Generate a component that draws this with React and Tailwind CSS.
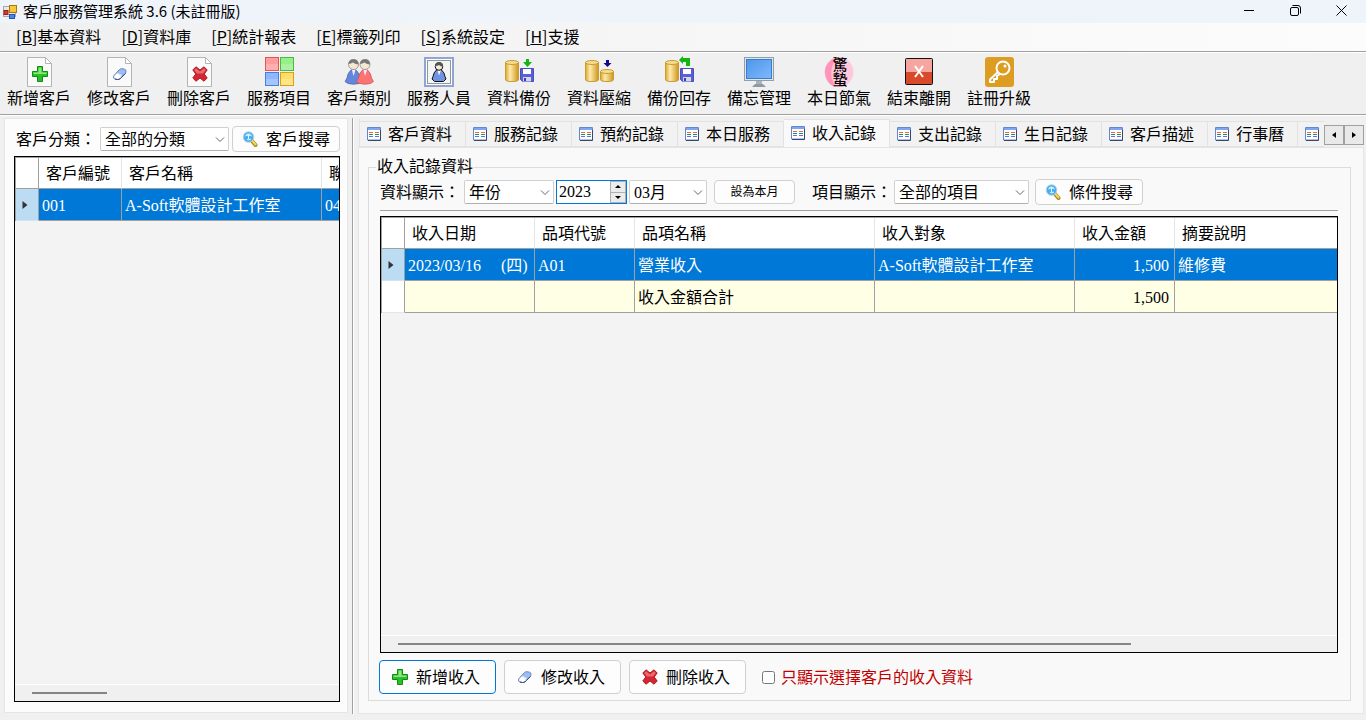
import { useState } from "react";

const PlusShape = () => (
  <>
    <path
      d="M5.500 .5h5v5h5v5h-5v5h-5v-5h-5v-5h5z"
      fill="#27c027"
      stroke="#0f8a12"
    />
    <path d="M6.500 1.500h3v5h5v1.500h-13v-1.500h5z" fill="#8bea7c" />
  </>
);

const EraserShape = () => (
  <>
    <path
      d="M2 9.500 7.500 3.500Q8.500 2.500 9.800 2.700L12.500 3.200Q14.300 3.700 14 5.500L13.500 7.500 8 12.700Q7 13.600 5.500 13.500L3 13Q1.300 12.500 1.500 11z"
      fill="#9dbcf5"
      stroke="#6a84b8"
    />
    <path
      d="M2.300 10 4.800 7.500 9 9.300 7.800 12Q6.800 13.200 5.500 13L3.200 12.500Q1.800 12 2.300 10z"
      fill="#fff"
    />
    <path d="m3 13 2.500.5q1.500.1 2.500-.8l5.500-5.200" fill="none" stroke="#33466e" />
    <path d="M5 7.200 9.300 9 8.500 11.800" fill="none" stroke="#dfe9fb" />
  </>
);

const CrossShape = () => (
  <>
    <path
      d="M4 .8 8 4 12 .8 15.200 4 12.200 8 15.200 12 12 15.200 8 12 4 15.200.8 12 3.800 8 .8 4z"
      fill="#d42631"
      stroke="#b01822"
      strokeLinejoin="round"
    />
    <path d="M4 2.200 8 5.500 12 2.200 13.800 4 11 7.500H5L2.200 4z" fill="#e8696f" />
  </>
);

const shapes = { plus: PlusShape, eraser: EraserShape, cross: CrossShape };

const SmallIcon = ({ name }) => {
  const Shape = shapes[name];
  return (
    <svg width="16" height="16" viewBox="0 0 16 16" aria-hidden="true">
      <Shape />
    </svg>
  );
};

const PageIcon = ({ name }) => {
  const Shape = shapes[name];
  return (
    <svg width="32" height="32" viewBox="0 0 32 32" aria-hidden="true">
      <path
        d="M4.500 1.500h18l6 6v23h-24z"
        fill="#fafafa"
        stroke="#b4b4b4"
      />
      <path d="M22.500 1.500v6h6z" fill="#fff" stroke="#b4b4b4" />
      <g transform="translate(9 10)">
        <Shape />
      </g>
    </svg>
  );
};

const TilesIcon = () => (
  <svg width="32" height="32" viewBox="0 0 32 32" aria-hidden="true">
    <rect x="2.500" y="1.500" width="13" height="13" fill="#ff9c9c" stroke="#e25555" />
    <rect x="17.500" y="1.500" width="13" height="13" fill="#98ee88" stroke="#4fb64a" />
    <rect x="2.500" y="16.500" width="13" height="13" fill="#8db8ff" stroke="#4b7fd6" />
    <rect x="17.500" y="16.500" width="13" height="13" fill="#ffdf6b" stroke="#dc9f1c" />
    <path d="M3 8h12v6H3zM18 8h12v6H18zM3 23h12v6H3zM18 23h12v6H18z" fill="#fff" opacity=".2" />
  </svg>
);

const Person = ({ body, edge }) => (
  <>
    <path
      d="M6 12h5q3.500 3 4 8l2 3.500-3 2q-5.500 1.500-11 0l-3-2L2 20q.5-5 4-8z"
      fill={body}
      stroke={edge}
      strokeWidth=".7"
    />
    <path d="M7 12 8.500 18l2-6z" fill="#eef" />
    <circle cx="8.500" cy="6.500" r="5" fill="#f7e6d2" stroke="#8b8b8b" strokeWidth=".8" />
    <path d="M3.500 6Q3.500 1.200 8.500 1.200t5 5.300Q10.500 6.500 8 4.500 6 5.500 3.500 6z" fill="#777" />
  </>
);

const PeopleIcon = () => (
  <svg width="32" height="32" viewBox="0 0 32 32" aria-hidden="true">
    <g transform="translate(2 2)">
      <Person body="#6686dc" edge="#4260ae" />
    </g>
    <g transform="translate(13.500 2)">
      <Person body="#fb7373" edge="#c94f4f" />
    </g>
  </svg>
);

const StaffIcon = () => (
  <svg width="32" height="32" viewBox="0 0 32 32" aria-hidden="true">
    <rect x="2" y="2" width="28" height="28" fill="#fff" stroke="#92a5d2" strokeWidth="2" />
    <rect x="4.500" y="4.500" width="23" height="23" fill="#f4f4f4" stroke="#8b9a9a" />
    <path
      d="M13.500 14h5q3 2.500 3.500 6.500l1 2.500-2.500 2.500h-9L9 23l1-2.500q.5-4 3.500-6.500z"
      fill="#6f93e0"
      stroke="#111"
    />
    <path d="M14.500 14 16 19.500l2-5.500z" fill="#fff" />
    <circle cx="16" cy="10.500" r="3.800" fill="#f7ead8" stroke="#111" />
    <path d="M12.200 10q0-4 4-4t3.800 4.500q-2.500 0-4-1.500-1.500 1-3.800 1z" fill="#555" />
  </svg>
);

const Cylinder = ({ w, h }) => (
  <>
    <path
      d={`M.5 2.500v${h - 5}q0 2 ${w / 2} 2t${w / 2}-2v-${h - 5}z`}
      fill="url(#gold)"
      stroke="#c89a30"
    />
    <ellipse cx={w / 2 + 0.5} cy="2.500" rx={w / 2} ry="2" fill="#f6dc8c" stroke="#c89a30" />
  </>
);

const Floppy = () => (
  <>
    <path d="M.5 .5h13v13h-11l-2-2z" fill="#5a5fd8" stroke="#4a4fc0" />
    <rect x="3" y="1" width="8" height="5" fill="#fff" />
    <rect x="3" y="9" width="8" height="4.500" fill="#d4d6e8" />
    <rect x="4" y="10" width="2" height="3" fill="#3a3fa8" />
  </>
);

const DataIcon = ({ kind }) => (
  <svg width="32" height="32" viewBox="0 0 32 32" aria-hidden="true">
    <defs>
      <linearGradient id="gold">
        <stop offset="0" stopColor="#dba632" />
        <stop offset=".35" stopColor="#fdebad" />
        <stop offset="1" stopColor="#d0961c" />
      </linearGradient>
    </defs>
    <g transform="translate(2 4)">
      <Cylinder w={13} h={22} />
    </g>
    {kind === "compress" ? (
      <g transform="translate(17 13)">
        <Cylinder w={13} h={13} />
      </g>
    ) : (
      <g transform="translate(17 12)">
        <Floppy />
      </g>
    )}
    {kind === "backup" && <path d="M23 3h3v3h3l-4.500 5L20 6h3z" fill="#12b512" />}
    {kind === "compress" && <path d="M23 4h3v3h2.500l-4 4-4-4H23z" fill="#0a0a8c" />}
    {kind === "restore" && (
      <path d="M16 4 20 0v2h7v8h-4V6h-3v2z" fill="#12b512" />
    )}
  </svg>
);

const MonitorIcon = () => (
  <svg width="32" height="32" viewBox="0 0 32 32" aria-hidden="true">
    <defs>
      <linearGradient id="screen" x2="1" y2="1">
        <stop offset="0" stopColor="#4f96e8" />
        <stop offset="1" stopColor="#7db8ff" />
      </linearGradient>
    </defs>
    <rect x="1.500" y="1.500" width="29" height="23" fill="#dfe6ea" stroke="#91a0a8" />
    <rect x="3.500" y="3.500" width="25" height="19" fill="url(#screen)" stroke="#3a7bd0" />
    <path d="M13 25h6v4h-6z" fill="#aab4ba" />
    <path d="M12 28h8l3 3H9z" fill="#8f9ba2" />
  </svg>
);

const SolarTermIcon = () => (
  <svg width="32" height="32" viewBox="0 0 32 32" aria-hidden="true">
    <ellipse cx="16" cy="16" rx="14.500" ry="15" fill="#ffc8dc" />
    <path d="M14 1Q-3 8 4 24q3 6 9 7-10-14 1-30z" fill="#ff94bb" />
    <text
      x="17"
      y="1"
      fontSize="15"
      fontWeight="500"
      style={{ writingMode: "vertical-rl" }}
      fontFamily="'Noto Sans CJK TC', sans-serif"
    >
      驚蟄
    </text>
  </svg>
);

const ExitIcon = () => (
  <svg width="32" height="32" viewBox="0 0 32 32" aria-hidden="true">
    <rect x="2.500" y="2.500" width="27" height="26" rx="1" fill="#d94a2a" stroke="#111" />
    <path d="M3 3h26v13H3z" fill="#f6a6a0" />
    <path d="m12 10 8 11m0-11-8 11" stroke="#fff" strokeWidth="2" />
  </svg>
);

const KeyIcon = () => (
  <svg width="32" height="32" viewBox="0 0 32 32" aria-hidden="true">
    <rect x="2" y="1" width="29" height="30" rx="3" fill="#dc9d22" />
    <g fill="none" stroke="#fff" strokeWidth="2" strokeLinejoin="round">
      <circle cx="20" cy="12" r="6.500" />
      <path d="m15 16-8 7.500v2.500h4v-3h3v-3l3-2" />
    </g>
    <circle cx="22" cy="10" r="1.500" fill="#fff" />
  </svg>
);

const SheetIcon = () => (
  <svg width="14" height="14" viewBox="0 0 14 14" aria-hidden="true" className="shrink-0">
    <path d="M.5 .5h13v12.500H.5z" fill="#fff" stroke="#6487cc" />
    <path d="M1 1h12v2H1z" fill="#7ea6f5" />
    <path d="M13.500 3v10.500H1" fill="none" stroke="#35486e" />
    <path d="M2 5.500h4M8 5.500h4" stroke="#f0683a" />
    <path d="M2 7.500h4M8 7.500h4" stroke="#149078" />
    <path d="M2 9.500h4M8 9.500h4" stroke="#6a6af0" />
  </svg>
);

const SearchIcon = () => (
  <svg width="16" height="16" viewBox="0 0 16 16" aria-hidden="true">
    <path d="m10 10 3.500 4" stroke="#a8882c" strokeWidth="4" strokeLinecap="round" />
    <path d="m10.500 10 3 3.500" stroke="#f7d94a" strokeWidth="2" strokeLinecap="round" />
    <circle cx="6.500" cy="6" r="5.300" fill="#48aeee" stroke="#b4d4e8" />
    <path d="M3 5.500Q4 2 7 2.500q2.500.5 3 3-3-1.500-7 0z" fill="#c4ecff" />
    <path d="M5 8.500q2 1 4-.5M6.500 4v4" stroke="#e8f8ff" fill="none" />
  </svg>
);

const AppIcon = () => (
  <svg width="14" height="14" viewBox="0 0 14 14" aria-hidden="true">
    <rect x=".5" y="1.500" width="12" height="10" fill="#e8e8e8" stroke="#a8a8a8" />
    <rect x="6.500" y=".5" width="7" height="7" fill="#f8c838" stroke="#a87812" />
    <rect x="1" y="5.500" width="4" height="4" fill="#d83a2a" stroke="#9a2014" />
    <rect x="6.500" y="9.500" width="5" height="4" fill="#4a86e8" stroke="#2458b0" />
  </svg>
);

const menus = [
  ["B", "基本資料"],
  ["D", "資料庫"],
  ["P", "統計報表"],
  ["E", "標籤列印"],
  ["S", "系統設定"],
  ["H", "支援"],
];

const tools = [
  ["新增客戶", <PageIcon name="plus" />],
  ["修改客戶", <PageIcon name="eraser" />],
  ["刪除客戶", <PageIcon name="cross" />],
  ["服務項目", <TilesIcon />],
  ["客戶類別", <PeopleIcon />],
  ["服務人員", <StaffIcon />],
  ["資料備份", <DataIcon kind="backup" />],
  ["資料壓縮", <DataIcon kind="compress" />],
  ["備份回存", <DataIcon kind="restore" />],
  ["備忘管理", <MonitorIcon />],
  ["本日節氣", <SolarTermIcon />],
  ["結束離開", <ExitIcon />],
  ["註冊升級", <KeyIcon />],
];

const tabs = [
  "客戶資料",
  "服務記錄",
  "預約記錄",
  "本日服務",
  "收入記錄",
  "支出記錄",
  "生日記錄",
  "客戶描述",
  "行事曆",
];

const Select = ({ className, label, options }) => (
  <div className={`relative h-6 ${className}`}>
    <select
      aria-label={label}
      className="h-full w-full appearance-none rounded-xs border border-[#d0d0d0] border-b-[#b0b0b0] bg-white pt-px pl-1 leading-5"
    >
      {options.map((o) => (
        <option key={o}>{o}</option>
      ))}
    </select>
    <svg
      width="10"
      height="6"
      viewBox="0 0 10 6"
      className="pointer-events-none absolute top-2.5 right-1"
      aria-hidden="true"
    >
      <path d="m1 .5 4 4 4-4" fill="none" stroke="#666" />
    </svg>
  </div>
);

const SearchButton = ({ children }) => (
  <button
    type="button"
    className="flex h-[26px] w-[108px] shrink-0 items-center gap-2 rounded border border-[#d0d0d0] bg-[#fdfdfd] pl-[9px] whitespace-nowrap"
  >
    <SearchIcon />
    <span className="pt-0.5">{children}</span>
  </button>
);

const RowMarker = () => (
  <svg width="6" height="8" viewBox="0 0 6 8" className="ml-1.5" aria-label="目前列">
    <path d="M.5 0v8l5-4z" fill="#333" />
  </svg>
);

const HScroll = ({ thumb }) => (
  <div className="mt-auto h-[17px] border-t border-white bg-[#f0f0f0] px-[17px] pt-[7px]">
    <div className={`h-0.5 bg-[#858585] ${thumb}`} />
  </div>
);

const headCell =
  "h-[31px] border-r border-b border-r-[#e5e5e5] border-b-[#a0a0a0] bg-white pt-0.5 pl-[7px] text-left font-normal whitespace-nowrap";
const cornerCell = "border-r border-b border-[#a0a0a0] bg-white";
const selectedCell =
  "h-8 border-r border-b border-[#a0a0a0] bg-[#0078d7] px-[3px] pt-0.5 text-white whitespace-nowrap";
const totalCell =
  "h-8 border-r border-b border-[#a0a0a0] bg-[#ffffe6] px-[3px] pt-0.5 whitespace-nowrap";
const markerCell = "border-r border-b border-r-[#a0a0a0] border-b-[#d0e4f2] bg-[#bcdcf4]";

const CustomerPanel = () => (
  <aside className="mt-0.5 mb-[7px] ml-1 flex w-[344px] shrink-0 flex-col border border-[#e5e5e5] bg-[#fcfcfc] pt-[7px] pr-[7px] pb-2.5 pl-[9px]">
    <div className="flex h-[26px] items-center">
      <span className="w-[86px] shrink-0 pt-0.5 pl-0.5 whitespace-nowrap">客戶分類：</span>
      <Select className="w-[129px] shrink-0" label="客戶分類" options={["全部的分類"]} />
      <div className="ml-auto">
        <SearchButton>客戶搜尋</SearchButton>
      </div>
    </div>
    <div className="mt-1 flex flex-1 flex-col border border-black bg-[#f3f3f3]">
      <div className="overflow-hidden border-t border-l border-[#a0a0a0]">
        <table className="w-[406px] table-fixed border-separate border-spacing-0">
          <colgroup>
            <col className="w-[23px]" />
            <col className="w-[83px]" />
            <col className="w-[200px]" />
            <col className="w-[100px]" />
          </colgroup>
          <thead>
            <tr>
              <th className={cornerCell} aria-label="列" />
              <th className={headCell}>客戶編號</th>
              <th className={headCell}>客戶名稱</th>
              <th className={headCell}>聯</th>
            </tr>
          </thead>
          <tbody>
            <tr>
              <td className={markerCell}>
                <RowMarker />
              </td>
              <td className={selectedCell}>001</td>
              <td className={selectedCell}>A-Soft軟體設計工作室</td>
              <td className={selectedCell}>04</td>
            </tr>
          </tbody>
        </table>
      </div>
      <HScroll thumb="w-[75px]" />
    </div>
  </aside>
);

const TabStrip = ({ active, onSelect }) => (
  <div className="flex h-7 items-end pl-px">
    <div role="tablist" className="flex min-w-0 flex-1 items-end overflow-hidden border-l border-[#e2e2e2]">
      {tabs.map((tab) => (
        <button
          key={tab}
          type="button"
          role="tab"
          aria-selected={tab === active}
          onClick={() => onSelect(tab)}
          className={`flex shrink-0 items-center gap-[7px] border-t border-r border-[#e2e2e2] pr-[13px] pl-[7px] whitespace-nowrap ${
            tab === active ? "h-7 bg-[#f9f9f9] pb-0.5" : "h-[26px] border-b bg-[#f2f2f2]"
          }`}
        >
          <SheetIcon />
          <span className="pt-0.5">{tab}</span>
        </button>
      ))}
      <button
        type="button"
        role="tab"
        aria-label="更多"
        className="flex h-[26px] w-7 shrink-0 items-center border-t border-b border-[#e2e2e2] bg-[#f2f2f2] pl-[7px]"
      >
        <SheetIcon />
      </button>
    </div>
    <div className="mb-0.5 flex shrink-0">
      <button
        type="button"
        aria-label="向左捲動"
        className="flex h-5 w-5 items-center justify-center border border-[#a0a0a0] bg-[#e9e9e9]"
      >
        <svg width="4" height="6" viewBox="0 0 4 6" aria-hidden="true">
          <path d="M4 0v6L0 3z" />
        </svg>
      </button>
      <button
        type="button"
        aria-label="向右捲動"
        className="flex h-5 w-5 items-center justify-center border border-[#a0a0a0] bg-[#e9e9e9]"
      >
        <svg width="4" height="6" viewBox="0 0 4 6" aria-hidden="true">
          <path d="M0 0v6l4-3z" />
        </svg>
      </button>
    </div>
  </div>
);

const YearInput = () => {
  const [year, setYear] = useState(2023);

  return (
    <div className="ml-0.5 flex h-6 w-[71px] shrink-0 border border-[#0078d7] bg-white">
      <input
        aria-label="年份"
        inputMode="numeric"
        value={year}
        onChange={(e) => setYear(Number(e.target.value) || 0)}
        className="w-0 min-w-0 flex-1 pl-0.5 outline-none"
      />
      <div className="flex w-4 flex-col border border-[#b0b0b0]">
        <button
          type="button"
          aria-label="增加"
          onClick={() => setYear(year + 1)}
          className="flex flex-1 items-center justify-center border-b border-[#b0b0b0] bg-[#ececec]"
        >
          <svg width="6" height="3" viewBox="0 0 6 3" aria-hidden="true">
            <path d="M0 3h6L3 0z" />
          </svg>
        </button>
        <button
          type="button"
          aria-label="減少"
          onClick={() => setYear(year - 1)}
          className="flex flex-1 items-center justify-center bg-[#ececec]"
        >
          <svg width="6" height="3" viewBox="0 0 6 3" aria-hidden="true">
            <path d="M0 0h6L3 3z" />
          </svg>
        </button>
      </div>
    </div>
  );
};

const IncomeTable = () => (
  <div className="mt-[5px] flex min-h-0 flex-1 flex-col border border-black bg-[#f3f3f3]">
    <div className="overflow-hidden border-t border-l border-[#a0a0a0]">
      <table className="w-full table-fixed border-separate border-spacing-0">
        <colgroup>
          <col className="w-[23px]" />
          <col className="w-[130px]" />
          <col className="w-[100px]" />
          <col className="w-[240px]" />
          <col className="w-[200px]" />
          <col className="w-[100px]" />
          <col />
        </colgroup>
        <thead>
          <tr>
            <th className={cornerCell} aria-label="列" />
            <th className={headCell}>收入日期</th>
            <th className={headCell}>品項代號</th>
            <th className={headCell}>品項名稱</th>
            <th className={headCell}>收入對象</th>
            <th className={headCell}>收入金額</th>
            <th className={`${headCell} border-r-0`}>摘要說明</th>
          </tr>
        </thead>
        <tbody>
          <tr>
            <td className={markerCell}>
              <RowMarker />
            </td>
            <td className={selectedCell}>
              <span className="mr-4">2023/03/16</span> (四)
            </td>
            <td className={selectedCell}>A01</td>
            <td className={selectedCell}>營業收入</td>
            <td className={selectedCell}>A-Soft軟體設計工作室</td>
            <td className={`${selectedCell} pr-[5px] text-right`}>1,500</td>
            <td className={`${selectedCell} border-r-0`}>維修費</td>
          </tr>
          <tr>
            <td className="border-r border-b border-r-[#a0a0a0] border-b-[#e5e5e5] bg-white" />
            <td className={totalCell} />
            <td className={totalCell} />
            <td className={totalCell}>收入金額合計</td>
            <td className={totalCell} />
            <td className={`${totalCell} pr-[5px] text-right`}>1,500</td>
            <td className={`${totalCell} border-r-0`} />
          </tr>
        </tbody>
      </table>
    </div>
    <HScroll thumb="w-[79.500%]" />
  </div>
);

const ActionButton = ({ icon, primary, children }) => (
  <button
    type="button"
    className={`flex h-[34px] w-[117px] shrink-0 items-center gap-2 rounded border bg-[#fdfdfd] pl-3 whitespace-nowrap ${
      primary ? "border-[#0078d7]" : "border-[#d0d0d0]"
    }`}
  >
    <SmallIcon name={icon} />
    <span className="pt-0.5">{children}</span>
  </button>
);

const IncomePage = () => {
  const [onlySelected, setOnlySelected] = useState(false);

  return (
    <div
      role="tabpanel"
      className="flex min-h-0 flex-1 flex-col border border-[#e5e5e5] bg-[#f9f9f9] pt-2.5 pr-3 pb-3 pl-[9px]"
    >
      <fieldset className="flex min-h-0 min-w-0 flex-1 flex-col border border-[#dcdcdc] pr-3 pb-1.5 pl-[11px]">
        <legend className="-ml-1 px-px leading-[18px]">收入記錄資料</legend>
        <div className="mt-[3px] flex h-[26px] items-center">
          <span className="w-[84px] shrink-0 pt-0.5 whitespace-nowrap">資料顯示：</span>
          <Select className="w-[90px] shrink-0" label="資料顯示" options={["年份", "全部"]} />
          <YearInput />
          <Select className="ml-0.5 w-[78px] shrink-0" label="月份" options={["03月", "04月"]} />
          <button
            type="button"
            className="ml-[7px] h-6 w-[81px] shrink-0 rounded border border-[#d0d0d0] bg-[#fdfdfd] text-xs"
          >
            設為本月
          </button>
          <span className="ml-[17px] w-[82px] shrink-0 pt-0.5 whitespace-nowrap">項目顯示：</span>
          <Select className="mr-1.5 w-[135px] shrink-0" label="項目顯示" options={["全部的項目"]} />
          <SearchButton>條件搜尋</SearchButton>
        </div>
        <div className="mt-[5px] h-px shrink-0 bg-[#a0a0a0]" />
        <IncomeTable />
        <div className="mt-[7px] -ml-px flex items-center gap-2">
          <ActionButton icon="plus" primary>
            新增收入
          </ActionButton>
          <ActionButton icon="eraser">修改收入</ActionButton>
          <ActionButton icon="cross">刪除收入</ActionButton>
          <label className="ml-2 flex items-center gap-1.5 text-[#c00000]">
            <input
              type="checkbox"
              checked={onlySelected}
              onChange={(e) => setOnlySelected(e.target.checked)}
              className="size-[13px]"
            />
            <span className="pt-0.5">只顯示選擇客戶的收入資料</span>
          </label>
        </div>
      </fieldset>
    </div>
  );
};

export default function App() {
  const [active, setActive] = useState("收入記錄");

  return (
    <div className="flex h-screen flex-col overflow-hidden bg-[#f0f0f0] font-['Liberation_Serif','Noto_Sans_CJK_TC',sans-serif] text-base leading-5 text-black">
      <header className="flex h-[23px] shrink-0 items-center bg-[#eff3fa] pl-[3px] font-['Noto_Sans_CJK_TC',sans-serif]">
        <AppIcon />
        <h1 className="mb-0.5 ml-1.5 text-[15px]">客戶服務管理系統 3.6 (未註冊版)</h1>
        <div className="mr-0.5 mb-0.5 ml-auto flex">
          <button type="button" aria-label="最小化" className="flex h-5 w-[46px] items-center justify-center">
            <svg width="11" height="11" viewBox="0 0 11 11" aria-hidden="true">
              <path d="M0 5.500h10" stroke="#000" />
            </svg>
          </button>
          <button type="button" aria-label="還原" className="flex h-5 w-[46px] items-center justify-center">
            <svg width="11" height="11" viewBox="0 0 11 11" fill="none" stroke="#000" aria-hidden="true">
              <rect x=".5" y="2.500" width="8" height="8" rx="1.500" />
              <path d="M2.500 .5h5.500q2.500 0 2.500 2.500v5.500" />
            </svg>
          </button>
          <button type="button" aria-label="關閉" className="flex h-5 w-[46px] items-center justify-center">
            <svg width="11" height="11" viewBox="0 0 11 11" aria-hidden="true">
              <path d="m.5 .5 10 10m0-10-10 10" stroke="#000" />
            </svg>
          </button>
        </div>
      </header>

      <nav className="flex h-[29px] shrink-0 items-center gap-5 border-b border-[#a0a0a0] bg-linear-to-r from-[#f0f0f0] to-[#fcfcfc] pb-0.5 pl-4 font-['Noto_Sans_CJK_TC',sans-serif]">
        {menus.map(([key, text]) => (
          <button key={key} type="button">
            [<u>{key}</u>]{text}
          </button>
        ))}
      </nav>

      <div className="flex h-[63px] shrink-0 gap-4 border-t border-b border-t-white border-b-[#a0a0a0] px-[7px] pt-[3px]">
        {tools.map(([text, icon]) => (
          <button key={text} type="button" className="flex w-16 shrink-0 flex-col items-center gap-px whitespace-nowrap">
            {icon}
            <span>{text}</span>
          </button>
        ))}
      </div>

      <main className="flex min-h-0 flex-1 border-t border-white">
        <CustomerPanel />
        <div className="mt-0.5 mb-1.5 ml-1 w-0.5 shrink-0 border-l border-[#a0a0a0] bg-white" />
        <section className="mt-[3px] mr-0.5 mb-1.5 ml-1 flex min-w-0 flex-1 flex-col">
          <TabStrip active={active} onSelect={setActive} />
          <IncomePage />
        </section>
      </main>
    </div>
  );
}
